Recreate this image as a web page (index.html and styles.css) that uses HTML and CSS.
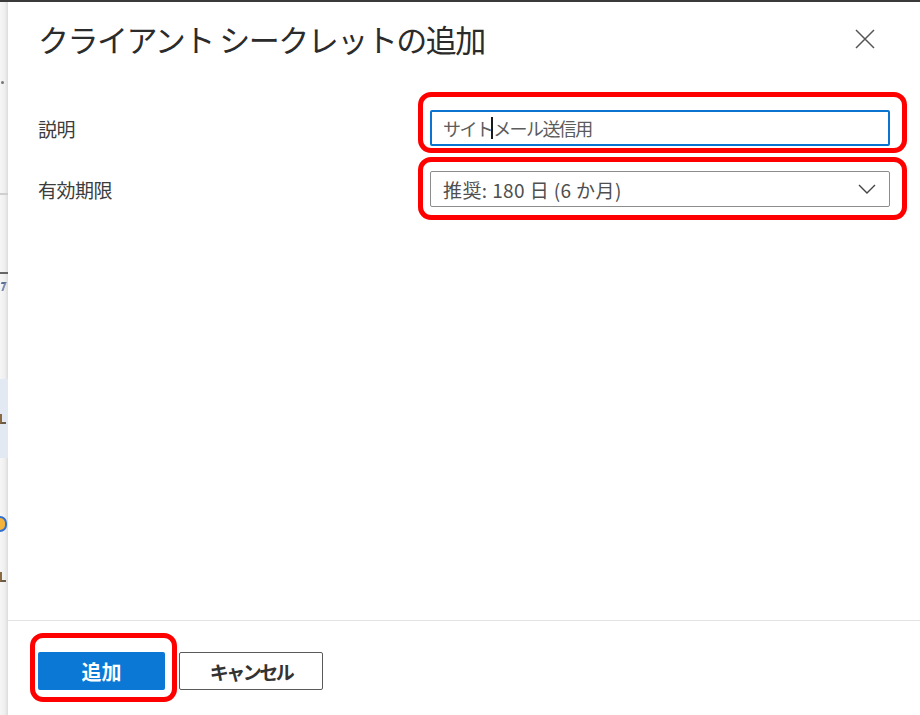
FILE: index.html
```html
<!DOCTYPE html>
<html lang="ja">
<head>
<meta charset="utf-8">
<title>クライアント シークレットの追加</title>
<link rel="stylesheet" href="styles.css">
</head>
<body>
<div class="topbar"></div>
<div class="screen">
  <aside class="strip">
    <span class="s-gap g1"></span>
    <span class="s-dot"></span>
    <span class="s-gap g2"></span>
    <span class="s-line light"></span>
    <span class="s-gap g3"></span>
    <span class="s-line dark"></span>
    <span class="s-gap g4"></span>
    <span class="s-frag blue"></span>
    <span class="s-gap g5"></span>
    <span class="s-band"><span class="s-frag brown"></span></span>
    <span class="s-gap g6"></span>
    <span class="s-frag orange"></span>
    <span class="s-gap g7"></span>
    <span class="s-frag brown"></span>
  </aside>
  <section class="panel">
    <header class="head">
      <h1 class="title">クライアント シークレットの追加</h1>
      <button class="close" aria-label="閉じる">
        <svg width="20" height="20" viewBox="0 0 20 20"><path d="M1 1 L19 19 M19 1 L1 19" stroke="#555" stroke-width="1.5" fill="none"/></svg>
      </button>
    </header>
    <div class="form">
      <div class="row">
        <label class="label">説明</label>
        <div class="field mark mark-a">
          <div class="input focused"><span>サイト</span><span class="caret"></span><span>メール送信用</span></div>
        </div>
      </div>
      <div class="row">
        <label class="label">有効期限</label>
        <div class="field mark mark-b">
          <div class="input select"><span class="sel-text">推奨: 180 日 (6 か月)</span>
            <svg class="chev" width="18" height="10" viewBox="0 0 18 10"><path d="M1 1 L9 9 L17 1" stroke="#444" stroke-width="1.4" fill="none"/></svg>
          </div>
        </div>
      </div>
    </div>
    <footer class="foot">
      <div class="mark mark-c"><button class="btn primary">追加</button></div>
      <button class="btn secondary">キャンセル</button>
    </footer>
  </section>
</div>
</body>
</html>
```
FILE: styles.css
```css
* { box-sizing: border-box; }
html, body { margin: 0; padding: 0; }
body {
  width: 920px;
  height: 715px;
  overflow: hidden;
  background: #fff;
  font-family: "Noto Sans CJK JP", "Noto Sans", sans-serif;
  color: #333;
}
.topbar { height: 2px; background: #3a3a3a; }
.screen { display: flex; height: 713px; }
.strip {
  width: 8px;
  flex: none;
  display: flex;
  flex-direction: column;
  background: linear-gradient(to right, #f6f6f6 0, #efefef 60%, #dcdcdc 100%);
}
.s-gap { display: block; flex: none; }
.g1 { height: 79px; }
.g2 { height: 109px; }
.g3 { height: 77px; }
.g4 { height: 8px; }
.g5 { height: 88px; }
.g6 { height: 58px; }
.g7 { height: 40px; }
.s-dot { display: block; width: 3px; height: 3px; margin-left: 1px; background: #777; border-radius: 50%; }
.s-line { display: block; height: 2px; }
.s-line.light { background: #cfcfcf; }
.s-line.dark { background: #666; }
.s-frag { display: block; width: 6px; height: 10px; }
.s-frag.blue { border-top: 2px solid #5a6f95; border-right: 2px solid #7a8bb0; width: 5px; height: 9px; transform: skewX(-20deg); }
.s-frag.brown { border-left: 2px solid #8a6a40; border-bottom: 2px solid #6b5a45; width: 6px; height: 10px; }
.s-frag.orange { width: 7px; height: 16px; border-radius: 0 8px 8px 0; border: 2px solid #2f6fd0; border-left: none; background: #f3b33d; }
.s-band { display: flex; align-items: center; height: 79px; background: #e3e9f3; }
.panel {
  flex: 1;
  display: flex;
  flex-direction: column;
  background: #fff;
}
.head {
  display: flex;
  align-items: center;
  justify-content: space-between;
  padding: 17px 45px 0 30px;
}
.title {
  margin: 0;
  font-size: 31px;
  line-height: 40px;
  font-weight: 400;
  letter-spacing: -1.5px;
  color: #2b2b2b;
}
.close {
  width: 20px;
  height: 20px;
  padding: 0;
  border: none;
  background: none;
  display: flex;
}
.form {
  flex: 1;
  display: flex;
  flex-direction: column;
  gap: 25px;
  padding: 51px 30px 0 30px;
}
.row {
  display: flex;
  align-items: center;
  justify-content: space-between;
}
.label {
  font-size: 19px;
  color: #3c3c3c;
  letter-spacing: -0.5px;
}
.field { width: 460px; }
.input {
  height: 36px;
  display: flex;
  align-items: center;
  padding: 0 12px;
  font-size: 18px;
  color: #5c5c5c;
  border: 1px solid #8c8c8c;
  border-radius: 2px;
}
.input.focused {
  border: 2px solid #0a74d0;
  padding-left: 11px;
  letter-spacing: -1.6px;
}
.caret {
  display: inline-block;
  width: 2px;
  height: 22px;
  background: #1a1a1a;
  margin: 0 0 0 -1px;
}
.select { justify-content: space-between; color: #4f4f4f; }
.sel-text { font-size: 19px; letter-spacing: 0.4px; }
.chev { margin-right: 1px; }
.mark { position: relative; }
.mark::after {
  content: "";
  position: absolute;
  border: 5px solid #ff0000;
  border-radius: 13px;
  pointer-events: none;
}
.mark-a::after { left: -12px; right: -17px; top: -18px; bottom: -7px; }
.mark-b::after { left: -12px; right: -17px; top: -14px; bottom: -13px; }
.mark-c::after { left: -8px; right: -12px; top: -19px; bottom: -12px; }
.foot {
  height: 95px;
  border-top: 1px solid #e3e3e3;
  display: flex;
  align-items: flex-start;
  gap: 14px;
  padding: 31px 30px 0 30px;
}
.btn {
  height: 38px;
  font-family: "Noto Sans CJK JP", sans-serif;
  font-weight: 700;
  border-radius: 2px;
  padding: 0;
  display: flex;
  align-items: center;
  justify-content: center;
}
.primary {
  width: 127px;
  background: #0a78d4;
  color: #fff;
  border: none;
  font-size: 20px;
}
.secondary {
  width: 144px;
  background: #fff;
  color: #333;
  border: 1.5px solid #5a5a5a;
  font-size: 19px;
  letter-spacing: -2.5px;
}
```
